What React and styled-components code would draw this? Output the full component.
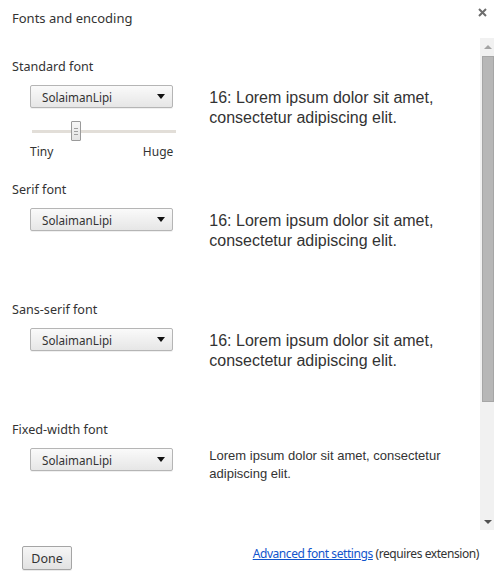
import React from "react";
import styled, { createGlobalStyle } from "styled-components";

const GlobalStyle = createGlobalStyle`
  html, body {
    margin: 0;
    padding: 0;
    background: #fff;
  }
  body {
    font-family: "Noto Sans", "Open Sans", sans-serif;
    color: #333;
  }
`;

const Dialog = styled.div`
  width: 494px;
  height: 580px;
  display: flex;
  flex-direction: column;
  background: #fff;
  overflow: hidden;
`;

const Header = styled.div`
  height: 38px;
  display: flex;
  align-items: flex-start;
  justify-content: space-between;
  padding: 0 6px 0 12px;
  box-sizing: border-box;
`;

const Title = styled.h1`
  margin: 9px 0 0;
  font-size: 13px;
  font-weight: normal;
  line-height: 18px;
  color: #333;
`;

const Close = styled.button`
  margin-top: 6px;
  width: 12px;
  height: 12px;
  padding: 0;
  border: 0;
  background: none;
  display: flex;
  align-items: center;
  justify-content: center;
`;

const Body = styled.div`
  height: 492px;
  display: flex;
`;

const Content = styled.div`
  flex: 1;
  overflow: hidden;
  padding: 20px 10px 0 12px;
  box-sizing: border-box;
`;

const Section = styled.section`
  min-height: ${(p) => p.$height}px;
`;

const Label = styled.h3`
  margin: 0;
  font-size: 12.6px;
  font-weight: normal;
  line-height: 18px;
  color: #333;
`;

const Row = styled.div`
  display: flex;
  margin-top: 9px;
  padding-left: 18px;
`;

const Controls = styled.div`
  width: 144px;
  display: flex;
  flex-direction: column;
`;

const Select = styled.div`
  height: 23px;
  box-sizing: border-box;
  border: 1px solid #b5b5b5;
  border-radius: 2px;
  background: linear-gradient(#fafafa, #e6e6e6);
  box-shadow: 0 1px 0 rgba(0, 0, 0, 0.06);
  display: flex;
  align-items: center;
  justify-content: space-between;
  padding: 0 7px 0 11px;
  font-size: 11.7px;
  color: #333;
`;

const Caret = styled.span`
  width: 0;
  height: 0;
  border-left: 4.5px solid transparent;
  border-right: 4.5px solid transparent;
  border-top: 5px solid #111;
`;

const Slider = styled.div`
  position: relative;
  height: 20px;
  margin: 13px -3px 0 2px;
  display: flex;
  align-items: center;
`;

const Track = styled.div`
  flex: 1;
  height: 3px;
  background: #e2ded8;
`;

const Thumb = styled.div`
  position: absolute;
  top: 0;
  width: 10px;
  height: 20px;
  box-sizing: border-box;
  border: 1px solid #9a9a9a;
  border-radius: 1px;
  background: linear-gradient(#f7f7f7, #e4e4e4);
  display: flex;
  flex-direction: column;
  align-items: center;
  justify-content: center;
  gap: 2px;
  span {
    width: 4px;
    height: 1px;
    background: #a0a0a0;
  }
`;

const Scale = styled.div`
  display: flex;
  justify-content: space-between;
  font-size: 12px;
  line-height: 16px;
  margin-top: 3px;
  color: #333;
`;

const Preview = styled.p`
  margin: ${(p) => (p.$small ? "-1px" : "3px")} 0 0 36px;
  width: 262px;
  font-family: "Liberation Sans", Arial, sans-serif;
  font-size: ${(p) => (p.$small ? "13px" : "16px")};
  line-height: ${(p) => (p.$small ? "18px" : "20px")};
  color: #333;
`;

const Scrollbar = styled.div`
  width: 14px;
  background: #f1f1f1;
  display: flex;
  flex-direction: column;
`;

const Arrow = styled.div`
  height: 17px;
  display: flex;
  align-items: center;
  justify-content: center;
  padding-left: 2px;
  &::after {
    content: "";
    border-left: 4px solid transparent;
    border-right: 4px solid transparent;
    ${(p) =>
      p.$down
        ? "border-top: 4px solid #505050;"
        : "border-bottom: 4px solid #a3a3a3;"}
  }
`;

const ScrollTrack = styled.div`
  flex: 1;
  padding: 1px 0 0 2px;
`;

const ScrollThumb = styled.div`
  height: 346px;
  box-sizing: border-box;
  background: #b7b7b7;
  border: 1px solid #a6a6a6;
`;

const Footer = styled.div`
  flex: 1;
  display: flex;
  align-items: flex-start;
  justify-content: space-between;
  padding: 16px 15px 0 22px;
`;

const Button = styled.button`
  width: 50px;
  height: 24px;
  border: 1px solid #a5a5a5;
  border-radius: 2px;
  background: linear-gradient(#f6f6f6, #e2e2e2);
  box-shadow: 0 1px 0 rgba(0, 0, 0, 0.08);
  font-family: inherit;
  font-size: 12.5px;
  color: #333;
  padding: 0;
`;

const Note = styled.div`
  font-size: 12px;
  letter-spacing: -0.42px;
  line-height: 18px;
  margin-top: -1px;
  color: #333;
`;

const Link = styled.a`
  color: #15c;
  text-decoration: underline;
`;

const sample = "16: Lorem ipsum dolor sit amet, consectetur adipiscing elit.";

const sections = [
  { label: "Standard font", slider: true, height: 123 },
  { label: "Serif font", height: 120 },
  { label: "Sans-serif font", height: 120 },
  { label: "Fixed-width font", small: true, height: 120 },
];

function FontSelect() {
  return (
    <Select>
      SolaimanLipi
      <Caret />
    </Select>
  );
}

function SizeSlider({ value }) {
  return (
    <>
      <Slider>
        <Track />
        <Thumb style={{ left: `${value * 134}px` }}>
          <span />
          <span />
          <span />
        </Thumb>
      </Slider>
      <Scale>
        <span>Tiny</span>
        <span>Huge</span>
      </Scale>
    </>
  );
}

export default function App() {
  return (
    <>
      <GlobalStyle />
      <Dialog>
        <Header>
          <Title>Fonts and encoding</Title>
          <Close aria-label="Close">
            <svg width="9" height="9" viewBox="0 0 9 9">
              <path d="M1 1L8 8M8 1L1 8" stroke="#6d6d6d" strokeWidth="2" />
            </svg>
          </Close>
        </Header>
        <Body>
          <Content>
            {sections.map((s) => (
              <Section key={s.label} $height={s.height}>
                <Label>{s.label}</Label>
                <Row>
                  <Controls>
                    <FontSelect />
                    {s.slider && <SizeSlider value={0.29} />}
                  </Controls>
                  <Preview $small={s.small}>
                    {s.small
                      ? "Lorem ipsum dolor sit amet, consectetur adipiscing elit."
                      : sample}
                  </Preview>
                </Row>
              </Section>
            ))}
          </Content>
          <Scrollbar>
            <Arrow />
            <ScrollTrack>
              <ScrollThumb />
            </ScrollTrack>
            <Arrow $down />
          </Scrollbar>
        </Body>
        <Footer>
          <Button>Done</Button>
          <Note>
            <Link href="#">Advanced font settings</Link> (requires extension)
          </Note>
        </Footer>
      </Dialog>
    </>
  );
}
